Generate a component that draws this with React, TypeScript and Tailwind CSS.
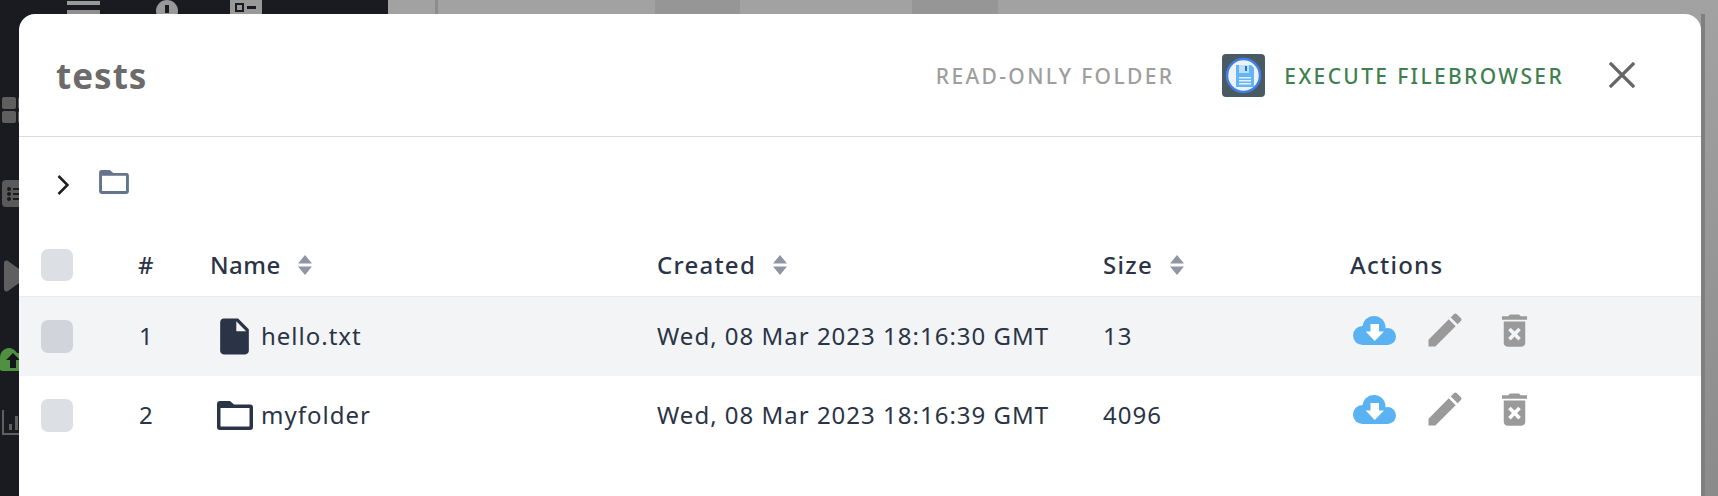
import { MdDeleteForever, MdEdit, MdInsertDriveFile } from "react-icons/md";

const columns = "grid grid-cols-[98px_72px_446px_446px_247px_1fr] items-center pl-[22px]";

const rows = [
  { id: 1, name: "hello.txt", created: "Wed, 08 Mar 2023 18:16:30 GMT", size: "13", folder: false },
  { id: 2, name: "myfolder", created: "Wed, 08 Mar 2023 18:16:39 GMT", size: "4096", folder: true },
];

function FolderIcon({ className }: { className: string }) {
  return (
    <svg viewBox="0 0 36 29" className={className} fill="currentColor" fillRule="evenodd">
      <path d="M3 0h10l4 3.5h16a3 3 0 0 1 3 3V26a3 3 0 0 1-3 3H3a3 3 0 0 1-3-3V3a3 3 0 0 1 3-3zM3.5 7v18.5h29V7z" />
    </svg>
  );
}

function CloudIcon() {
  return (
    <svg viewBox="0 0 43 29" className="h-[29px] w-[43px]">
      <g fill="#5ab2f2">
        <circle cx="9.5" cy="19.5" r="9.5" />
        <circle cx="21" cy="11.5" r="11.5" />
        <circle cx="34.5" cy="20.5" r="8.5" />
        <rect x="9" y="15" width="26" height="14" />
      </g>
      <path d="M17.5 8h8.5v7.5h5L21.7 25l-9-9.5h4.8z" fill="#ffffff" />
    </svg>
  );
}

function SortIcon() {
  return (
    <svg viewBox="0 0 14 20" className="ml-[17px] h-[20px] w-[14px] fill-[#8f95a3]">
      <path d="M7 0l7 8.5H0zM7 20l7-8.5H0z" />
    </svg>
  );
}

function HeaderCell({ label, className = "" }: { label: string; className?: string }) {
  return (
    <div className="flex items-center">
      <span className={className}>{label}</span>
      <SortIcon />
    </div>
  );
}

function Backdrop() {
  return (
    <div className="absolute inset-0 flex">
      <aside className="relative w-[388px] bg-[#1a1b20]">
        <div className="absolute left-[67px] top-[1px] h-[4px] w-[33px] bg-[#999999]" />
        <div className="absolute left-[67px] top-[10px] h-[4px] w-[33px] bg-[#8f8f8f]" />
        <div className="absolute left-[156px] top-0 flex h-[22px] w-[22px] items-start justify-center rounded-full bg-[#999999] pt-[5px]">
          <div className="h-[8px] w-[4px] bg-[#1a1b20]" />
        </div>
        <div className="absolute left-[230px] top-0 flex h-[14px] w-[32px] items-center gap-[3px] bg-[#999999] pl-[5px]">
          <div className="h-[9px] w-[9px] border-2 border-[#1a1b20]" />
          <div className="h-[3px] w-[9px] bg-[#1a1b20]" />
        </div>
        <div className="absolute left-[2px] top-[97px] grid grid-cols-2 gap-[2px]">
          <div className="h-[12px] w-[14px] rounded-[2px] bg-[#5f5f5f]" />
          <div className="h-[12px] w-[14px] rounded-[2px] bg-[#5f5f5f]" />
          <div className="h-[12px] w-[14px] rounded-[2px] bg-[#5f5f5f]" />
          <div className="h-[12px] w-[14px] rounded-[2px] bg-[#5f5f5f]" />
        </div>
        <svg viewBox="0 0 24 27" className="absolute left-[2px] top-[180px] h-[27px] w-[24px]">
          <rect width="24" height="27" rx="4" fill="#5a5a5a" />
          <path d="M7 7a2 2 0 1 0 .01 0zM7 12a2 2 0 1 0 .01 0zM7 17a2 2 0 1 0 .01 0z" fill="#1a1b20" />
          <path d="M11 8h10v2H11zM11 13h10v2H11zM11 18h10v2H11z" fill="#1a1b20" />
        </svg>
        <svg viewBox="0 0 24 32" className="absolute left-[3px] top-[260px] h-[32px] w-[24px] fill-[#5f5f5f]">
          <path d="M1 3c0-2 2-3 4-2l18 13c1 1 1 3 0 4L5 31c-2 1-4 0-4-2z" />
        </svg>
        <svg viewBox="0 0 26 28" className="absolute left-0 top-[345px] h-[28px] w-[26px]">
          <path d="M0 12a9 9 0 0 1 17-4a8 8 0 0 1 9 9a9 9 0 0 1-8 9H2a8 8 0 0 1-2-14z" fill="#4f9140" />
          <path d="M13 8l7 7h-4v8h-6v-8H6z" fill="#14151a" />
        </svg>
        <svg viewBox="0 0 24 26" className="absolute left-[2px] top-[410px] h-[26px] w-[24px]">
          <path d="M1 0v24h22" fill="none" stroke="#5f5f5f" strokeWidth="2" />
          <path d="M7 14h3v6H7zM13 6h3v14h-3z" fill="#5f5f5f" />
        </svg>
      </aside>
      <main className="relative flex-1 bg-gradient-to-b from-[#a2a2a2] to-[#8b8b8b]">
        <div className="absolute left-[47px] top-0 h-full w-[3px] bg-[#8d8d8d]" />
        <div className="absolute left-[267px] top-0 h-[14px] w-[85px] bg-[#969696]" />
        <div className="absolute left-[524px] top-0 h-[14px] w-[86px] bg-[#969696]" />
        <div className="absolute left-[1313px] top-[14px] h-full w-[4px] bg-[#7f7f7f]" />
      </main>
    </div>
  );
}

export default function App() {
  return (
    <div className="relative h-[496px] w-[1718px] overflow-hidden pl-[19px] pt-[14px] font-['Noto_Sans',sans-serif] text-[#2a3446]">
      <Backdrop />
      <div className="relative h-[500px] w-[1682px] rounded-t-[16px] bg-white">
        <header className="flex h-[123px] items-center justify-between border-b border-[#dcdcdc] pl-[37px] pr-[66px]">
          <h1 className="pt-[2px] text-[35px] font-bold tracking-[1px] text-[#6b6b6b]">tests</h1>
          <div className="flex items-center">
            <span className="pt-[3px] text-[21px] font-medium tracking-[2.35px] text-[#9e9e9e]">READ-ONLY FOLDER</span>
            <svg viewBox="0 0 43 43" className="ml-[48px] h-[43px] w-[43px]">
              <rect width="43" height="43" rx="4" fill="#4a5a63" />
              <circle cx="21.5" cy="21.5" r="16.5" fill="#eef1f5" stroke="#3f7fe8" strokeWidth="2.5" />
              <path d="M14 11h15l3 3v19H14z" fill="#64b5f6" />
              <rect x="17" y="11" width="10" height="8" fill="#bbdefb" />
              <rect x="23" y="12" width="2" height="5" fill="#1976d2" />
              <path d="M17 23h12v1.5H17zM17 26h12v1.5H17zM17 29h12v1.5H17z" fill="#e3f2fd" />
            </svg>
            <span className="ml-[19px] pt-[3px] text-[21px] font-medium tracking-[2.35px] text-[#3f7f50]">EXECUTE FILEBROWSER</span>
            <svg viewBox="0 0 26 26" className="ml-[45px] h-[26px] w-[26px] stroke-[#666666]" strokeWidth="3.2" strokeLinecap="square">
              <path d="M2 2l22 22M24 2L2 24" />
            </svg>
          </div>
        </header>

        <div className="flex h-[96px] items-start pl-[38px] pt-[33px]">
          <svg viewBox="0 0 12 20" className="mt-[5px] h-[20px] w-[12px] fill-none stroke-[#1f1f1f]" strokeWidth="2.6">
            <path d="M1.5 1l9 9-9 9" />
          </svg>
          <FolderIcon className="ml-[30px] h-[24px] w-[30px] text-[#64748b]" />
        </div>

        <div className={`${columns} h-[64px] border-b border-[#e8eaee] text-[24px] font-medium tracking-[1.25px]`}>
          <div className="h-[32px] w-[32px] rounded-[7px] bg-[#dcdfe4]" />
          <span className="-ml-[1px]">#</span>
          <HeaderCell label="Name" className="-ml-[1px] tracking-[0.5px]" />
          <HeaderCell label="Created" />
          <HeaderCell label="Size" />
          <span>Actions</span>
        </div>

        {rows.map((row) => (
          <div
            key={row.id}
            className={`${columns} h-[79px] text-[24px] tracking-[1px] ${row.folder ? "" : "bg-[#f3f4f6]"}`}
          >
            <div className={`h-[33px] w-[32px] rounded-[7px] ${row.folder ? "bg-[#dcdfe4]" : "bg-[#d1d5db]"}`} />
            <span className="pb-[2px]">{row.id}</span>
            <div className="flex items-center">
              <div className="flex w-[45px] justify-end">
                {row.folder ? (
                  <FolderIcon className="mr-[3px] h-[29px] w-[36px]" />
                ) : (
                  <MdInsertDriveFile size={43} />
                )}
              </div>
              <span className="ml-[5px] pb-[2px]">{row.name}</span>
            </div>
            <span className="pb-[2px]">{row.created}</span>
            <span className="pb-[2px]">{row.size}</span>
            <div className="flex items-center pb-[13px] pl-[3px]">
              <CloudIcon />
              <MdEdit size={44} className="ml-[27px] text-[#9a9a9a]" />
              <MdDeleteForever size={43} className="ml-[26px] text-[#9a9a9a]" />
            </div>
          </div>
        ))}
      </div>
    </div>
  );
}
